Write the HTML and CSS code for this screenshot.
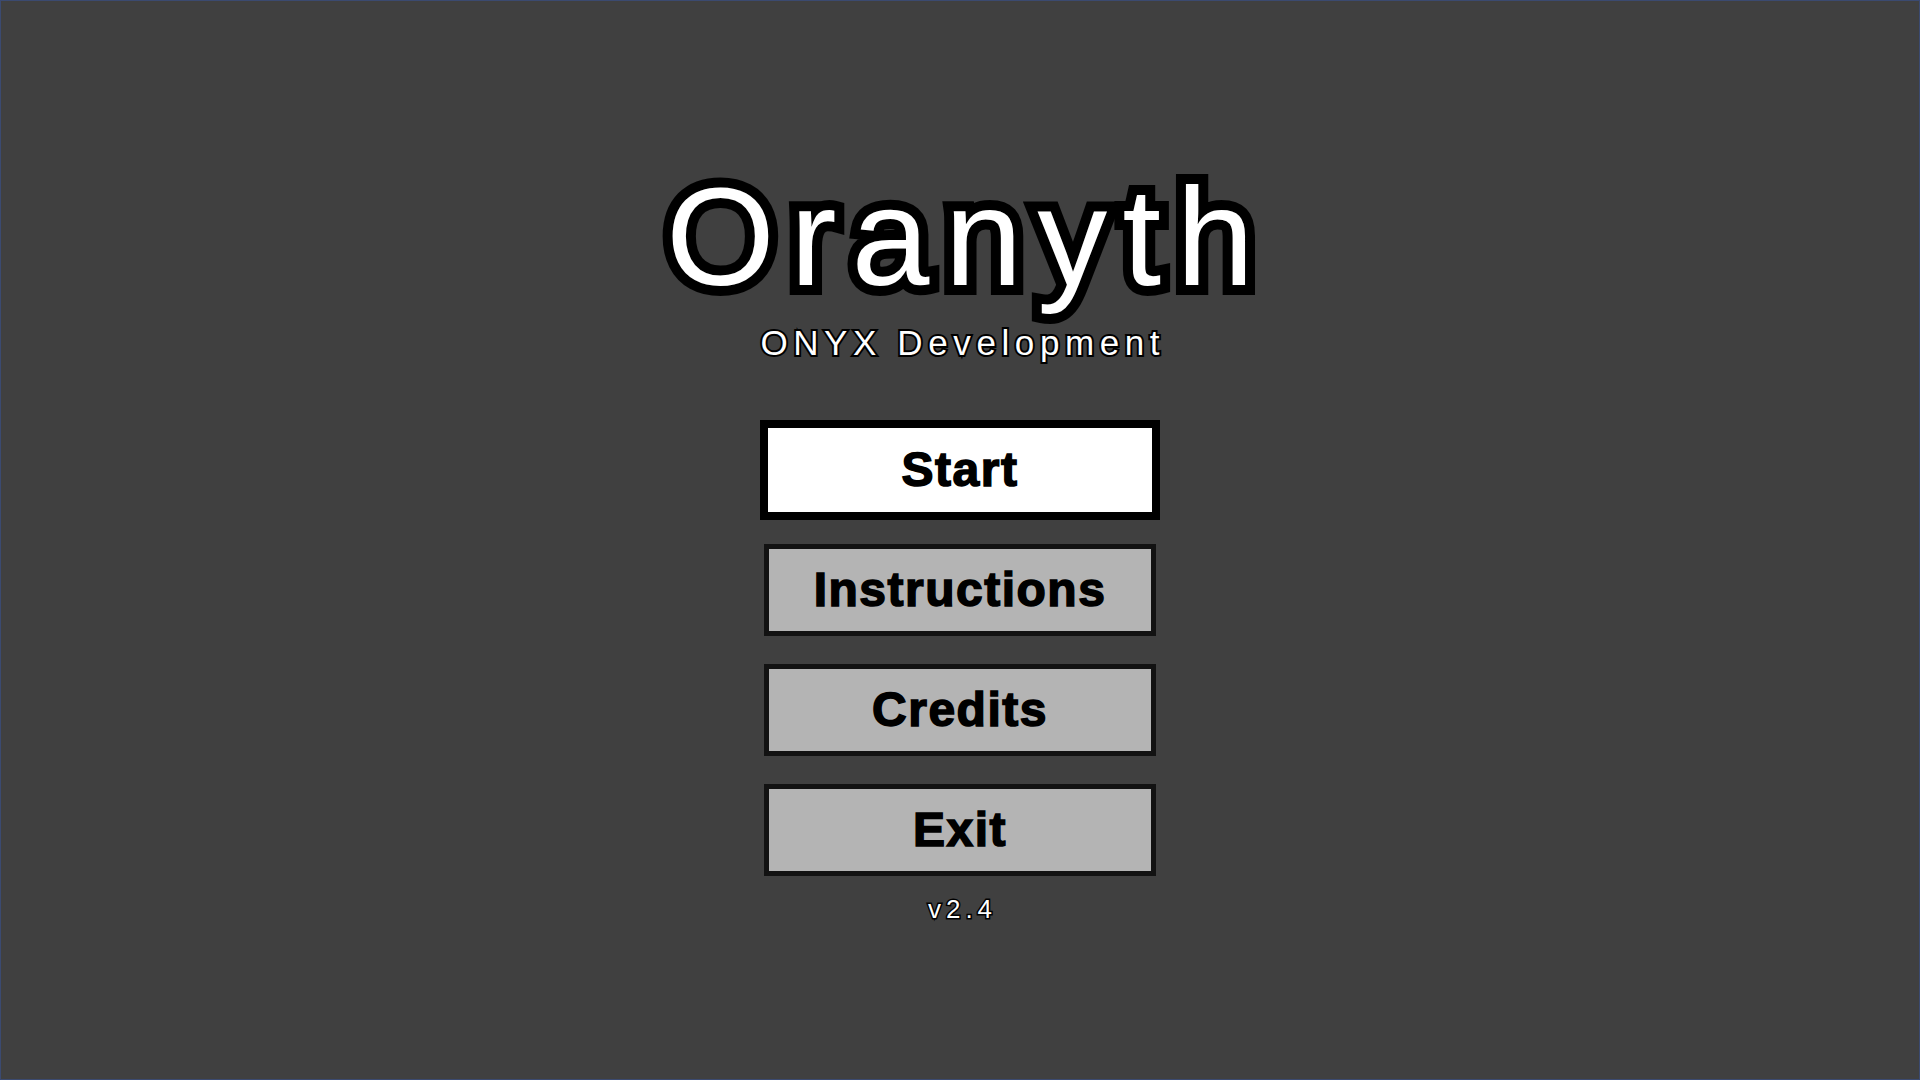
FILE: index.html
```html
<!DOCTYPE html>
<html lang="en">
<head>
<meta charset="utf-8">
<title>Oranyth</title>
<link rel="stylesheet" href="styles.css">
</head>
<body>
<main class="screen">
  <h1 class="title">Oranyth</h1>
  <p class="subtitle">ONYX Development</p>
  <nav class="menu">
    <button class="menu-btn menu-btn--active">Start</button>
    <button class="menu-btn">Instructions</button>
    <button class="menu-btn">Credits</button>
    <button class="menu-btn">Exit</button>
  </nav>
  <p class="version">v2.4</p>
</main>
</body>
</html>
```
FILE: styles.css
```css
* { box-sizing: border-box; }
html, body { margin: 0; padding: 0; }
body {
  width: 1920px;
  height: 1080px;
  background: #404040;
  overflow: hidden;
}
.screen {
  width: 1920px;
  height: 1080px;
  border: 1px solid #3b4a70;
  display: flex;
  flex-direction: column;
  align-items: center;
  padding-top: 166px;
}
.title {
  margin: 0;
  font-family: "Liberation Sans", Arial, sans-serif;
  font-weight: 400;
  font-size: 140px;
  line-height: 1;
  letter-spacing: 15px;
  padding-left: 15px;
  color: #fff;
  -webkit-text-stroke: 20px #000;
  paint-order: stroke fill;
}
.subtitle {
  margin: 18px 0 0;
  font-family: "Liberation Sans", Arial, sans-serif;
  font-size: 35px;
  line-height: 1;
  letter-spacing: 5.6px;
  padding-left: 5.6px;
  color: #fff;
  -webkit-text-stroke: 4px #000;
  paint-order: stroke fill;
}
.menu {
  margin-top: 63.5px;
  display: flex;
  flex-direction: column;
  align-items: center;
  gap: 28px;
}
.menu-btn {
  width: 392px;
  height: 92px;
  margin: 0;
  padding: 0;
  background: #b4b4b4;
  border: 5px solid #121212;
  font-family: "Liberation Sans", Arial, sans-serif;
  font-weight: 700;
  font-size: 48px;
  letter-spacing: 1.5px;
  color: #000;
  -webkit-text-stroke: 1.5px #000;
  display: flex;
  align-items: center;
  justify-content: center;
}
.menu-btn--active {
  width: 400px;
  height: 100px;
  margin: -4px 0;
  background: #fff;
  border: 8px solid #000;
}
.version {
  margin: 20px 0 0;
  font-family: "Liberation Sans", Arial, sans-serif;
  font-size: 26px;
  line-height: 1;
  letter-spacing: 5px;
  padding-left: 5px;
  color: #fff;
  -webkit-text-stroke: 3px #000;
  paint-order: stroke fill;
}
```
